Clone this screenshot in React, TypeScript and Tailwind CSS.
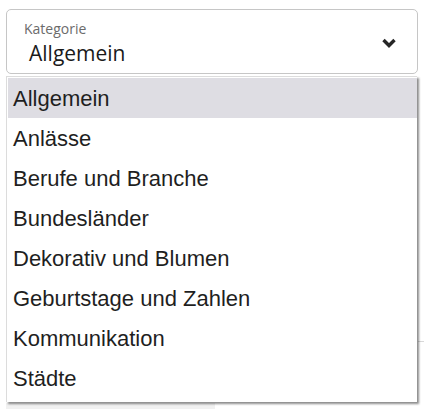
import React from "react";

const items = [
  "Allgemein",
  "Anlässe",
  "Berufe und Branche",
  "Bundesländer",
  "Dekorativ und Blumen",
  "Geburtstage und Zahlen",
  "Kommunikation",
  "Städte",
];

export default function App() {
  return (
    <div className="relative w-[424px] h-[409px] bg-white overflow-hidden">
      {/* background hints behind dropdown */}
      <div className="absolute left-[418px] top-[341px] w-[6px] h-px bg-[#d8d8d8]" />
      <div className="absolute left-[6px] top-[403px] w-[209px] h-[6px] bg-[#f1f1f1]" />

      <div className="pt-[9px] pl-[6px]">
        <div className="w-[412px] h-[65px] border border-[#c6c6c6] rounded-[5px] flex items-center justify-between pr-[20px]">
          <div className="flex flex-col pl-[17px] pt-[5px]">
            <span className="text-[14px] leading-[18px] text-[#6b6b6b] font-['Open_Sans',sans-serif]">
              Kategorie
            </span>
            <span className="pl-[5px] text-[21px] leading-[30px] text-[#1a1a1a] font-['Open_Sans',sans-serif]">
              Allgemein
            </span>
          </div>
          <svg width="16" height="12" viewBox="0 0 16 12" className="mt-[3px]">
            <path d="M2.5 3 L8 8.5 L13.5 3" fill="none" stroke="#262626" strokeWidth="3.4" strokeLinecap="butt" strokeLinejoin="miter" />
          </svg>
        </div>
      </div>

      <div className="absolute left-[6px] top-[76px] w-[411px] h-[326px] bg-white border-l border-t border-[#dcdcdc] shadow-[2px_2px_2px_rgba(0,0,0,0.45)] pt-px pl-px">
        {items.map((it, i) => (
          <div
            key={it}
            className={
              "h-[40px] flex items-center pl-[5px] text-[22px] text-[#1f1f1f] font-['Liberation_Sans',Arial,sans-serif] " +
              (i === 0 ? "bg-[#dedde3]" : "")
            }
          >
            {it}
          </div>
        ))}
      </div>
    </div>
  );
}
